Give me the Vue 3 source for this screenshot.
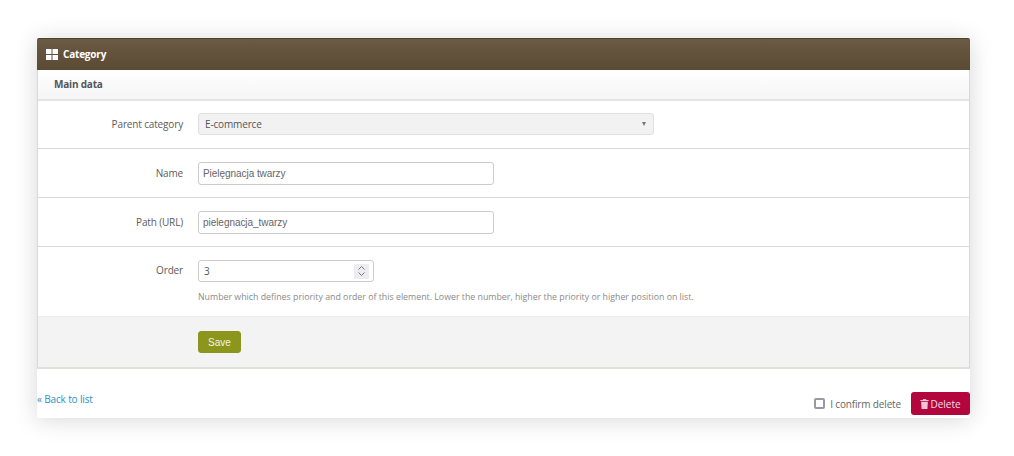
<script setup>
const rows = [
  { label: 'Name', value: 'Pielęgnacja twarzy' },
  { label: 'Path (URL)', value: 'pielegnacja_twarzy' }
]
</script>

<template>
  <div class="page">
    <div class="card">
      <div class="head">
        <svg class="grid-icon" width="12" height="11" viewBox="0 0 12 11">
          <path fill="#fff" d="M0 0h5.500v5H0zM6.500 0H12v5H6.500zM0 6h5.500v5H0zM6.500 6H12v5H6.500z" />
        </svg>
        <span class="title">Category</span>
      </div>
      <div class="form-box">
        <div class="sub"><span class="title">Main data</span></div>
        <div class="row row-first">
          <label class="lab">Parent category</label>
          <div class="select">
            <span>E-commerce</span>
            <i class="caret"></i>
          </div>
        </div>
        <div v-for="r in rows" :key="r.label" class="row">
          <label class="lab">{{ r.label }}</label>
          <input class="text" :value="r.value" />
        </div>
        <div class="row row-order">
          <label class="lab">Order</label>
          <div>
            <div class="number">
              <span>3</span>
              <span class="spin">
                <svg width="9" height="12" viewBox="0 0 9 12" fill="none" stroke="#777" stroke-width="1">
                  <path d="M1.500 4.500 4.500 1.500l3 3M1.500 7.500l3 3 3-3" />
                </svg>
              </span>
            </div>
            <p class="hint">Number which defines priority and order of this element. Lower the number, higher the priority or higher position on list.</p>
          </div>
        </div>
        <div class="actions">
          <button class="save">Save</button>
        </div>
      </div>
      <div class="bottom">
        <a class="back">« Back to list</a>
        <div class="del-wrap">
          <label class="confirm"><i class="check"></i>I confirm delete</label>
          <button class="delete">
            <svg width="9" height="10" viewBox="0 0 9 11">
              <path fill="#f3c6d5" d="M3 0h3l.5 1H9v1.200H0V1h2.500zM.8 3h7.400l-.5 8H1.300z" />
            </svg>
            <span>Delete</span>
          </button>
        </div>
      </div>
    </div>
  </div>
</template>

<style>
html, body { margin: 0; background: #fff; }
</style>

<style scoped>
.page {
  width: 1014px;
  height: 456px;
  box-sizing: border-box;
  padding: 38px 44px 38px 37px;
  font-family: "Open Sans", "Liberation Sans", sans-serif;
  font-size: 10px;
  letter-spacing: -0.15px;
  color: #555;
  overflow: hidden;
}
.card {
  height: 380px;
  background: #fff;
  box-shadow: 0 2px 22px rgba(0, 0, 0, 0.16);
  display: flex;
  flex-direction: column;
}
.head {
  height: 32px;
  flex: none;
  box-sizing: border-box;
  background: linear-gradient(#6b5a44, #5a4a34);
  border-top: 1px solid #4f412e;
  border-radius: 2px 2px 0 0;
  display: flex;
  align-items: center;
  padding: 0 0 1px 9px;
  gap: 5px;
  color: #fff;
}
.title { font-weight: 700; font-size: 10px; letter-spacing: -0.2px; }
.grid-icon { flex: none; }
.form-box {
  flex: none;
  box-sizing: border-box;
  border-left: 1px solid #d9d9d9;
  border-right: 1px solid #d9d9d9;
  border-bottom: 2px solid #e2dfdb;
}
.sub {
  height: 31px;
  box-sizing: border-box;
  background: linear-gradient(#fff, #f5f5f5);
  border-bottom: 2px solid #e4e4e4;
  padding: 0 0 1px 16px;
  display: flex;
  align-items: center;
  color: #555;
}
.row {
  height: 49px;
  box-sizing: border-box;
  border-bottom: 1px solid #d9d9d9;
  display: flex;
  align-items: center;
}
.row-first { height: 48px; padding-bottom: 1px; }
.row-order {
  height: 70px;
  align-items: flex-start;
  padding-top: 13px;
  border-bottom: 1px solid #ececec;
}
.row-order .lab { line-height: 21px; }
.lab {
  width: 145px;
  margin-right: 15px;
  text-align: right;
  color: #5c5c5c;
  flex: none;
}
.select {
  width: 456px;
  height: 22px;
  box-sizing: border-box;
  background: #f2f2f2;
  border: 1px solid #e0e0e0;
  border-radius: 3px;
  padding: 0 7px 0 6px;
  display: flex;
  align-items: center;
  justify-content: space-between;
  color: #555;
}
.caret {
  width: 0;
  height: 0;
  border-left: 2.500px solid transparent;
  border-right: 2.500px solid transparent;
  border-top: 4px solid #777;
}
.text {
  width: 296px;
  height: 23px;
  box-sizing: border-box;
  border: 1px solid #ccc;
  border-radius: 3px;
  padding: 0 4px;
  font-family: "Liberation Sans", sans-serif;
  font-size: 10px;
  letter-spacing: -0.05px;
  color: #666;
  background: #fff;
  outline: none;
}
.number {
  width: 176px;
  height: 22px;
  box-sizing: border-box;
  border: 1px solid #ccc;
  border-radius: 3px;
  padding: 0 4px 0 5px;
  display: flex;
  align-items: center;
  justify-content: space-between;
  color: #555;
}
.spin {
  width: 15px;
  height: 15px;
  background: #ededf0;
  display: flex;
  align-items: center;
  justify-content: center;
}
.hint {
  margin: 9px 0 0;
  font-size: 8.800px;
  letter-spacing: 0;
  line-height: 13px;
  color: #8a8a8a;
  white-space: nowrap;
}
.actions {
  height: 50px;
  box-sizing: border-box;
  background: #f3f3f3;
  padding: 14px 0 0 160px;
}
.save {
  display: block;
  width: 43px;
  height: 22px;
  padding: 0;
  border: 1px solid #8b9320;
  border-radius: 3px;
  background: #8c951c;
  color: #f4f4e4;
  font-family: "Liberation Sans", sans-serif;
  font-size: 10px;
  letter-spacing: 0;
}
.bottom {
  flex: 1;
  display: flex;
  justify-content: space-between;
  align-items: flex-end;
}
.back {
  color: #1d93c9;
  margin-bottom: 12px;
  line-height: 14px;
}
.del-wrap {
  display: flex;
  align-items: center;
  margin-bottom: 3px;
}
.confirm {
  display: flex;
  align-items: center;
  gap: 5px;
  margin-right: 10px;
  color: #666;
}
.check {
  width: 11px;
  height: 11px;
  box-sizing: border-box;
  border: 2px solid #9999a5;
  border-radius: 2px;
}
.delete {
  width: 59px;
  height: 23px;
  padding: 0;
  border: 0;
  border-radius: 3px;
  background: #b3063f;
  color: #f7dbe4;
  font: inherit;
  letter-spacing: 0;
  display: flex;
  align-items: center;
  justify-content: center;
  gap: 1px;
}
</style>
